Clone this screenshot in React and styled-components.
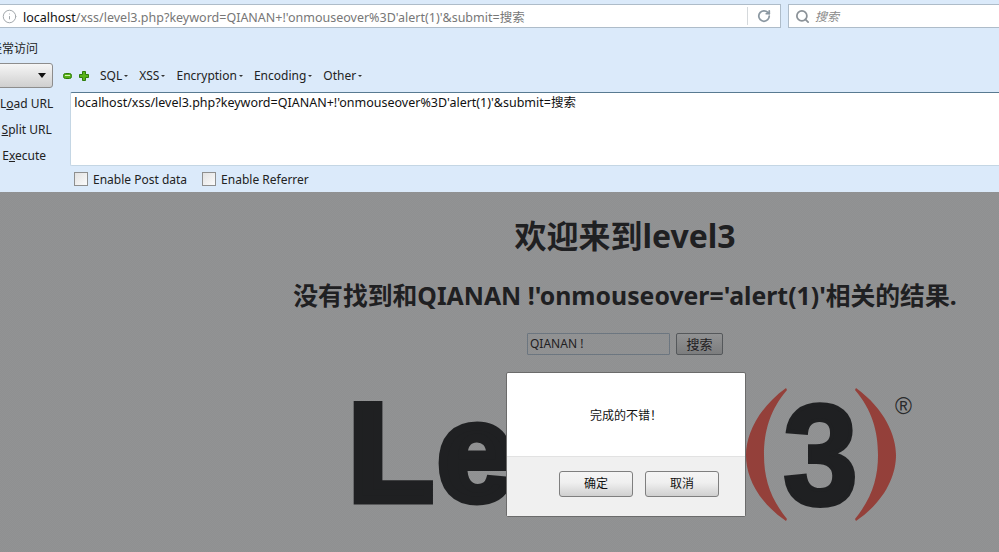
import styled, { createGlobalStyle } from 'styled-components';
import { Info, RotateCw, Search } from 'lucide-react';

const CJK = '"Noto Sans CJK SC"';
const UI_FONT = `"Noto Sans", ${CJK}, sans-serif`;

const GlobalStyle = createGlobalStyle`
  html, body {
    margin: 0;
    padding: 0;
    width: 999px;
    height: 552px;
    overflow: hidden;
    background: #909192;
    font-family: ${UI_FONT};
  }
`;

function App() {
  return (
    <Page>
      <GlobalStyle />
      <Chrome>
        <NavRow>
          <UrlBar>
            <Info size={15} color="#a3a8ac" strokeWidth={1.6} />
            <UrlText><b>localhost</b>/xss/level3.php?keyword=QIANAN+!'onmouseover%3D'alert(1)'&amp;submit=搜索</UrlText>
            <Reload><RotateCw size={14} color="#8b98a2" strokeWidth={3} /></Reload>
          </UrlBar>
          <SearchBar>
            <Search size={15} color="#8b9298" strokeWidth={2.8} />
            <em>搜索</em>
          </SearchBar>
        </NavRow>
        <Bookmarks>经常访问</Bookmarks>
        <HackbarRow>
          <Select><SelectArrow /></Select>
          <svg width="10" height="8" viewBox="0 0 10 8">
            <rect x="0.5" y="1.5" width="8" height="5" rx="2" fill="#57b018" stroke="#2f7d0c" />
            <rect x="2" y="3" width="5" height="1" fill="#d7f3b8" />
          </svg>
          <svg width="10" height="10" viewBox="0 0 10 10">
            <path d="M3.5 .5h3v3h3v3h-3v3h-3v-3h-3v-3h3z" fill="#59b31a" stroke="#2f7d0c" />
          </svg>
          <Menus>
            {['SQL', 'XSS', 'Encryption', 'Encoding', 'Other'].map(m => (
              <Menu key={m}>{m}<Caret /></Menu>
            ))}
          </Menus>
        </HackbarRow>
        <UrlPanel>
          <Actions>
            <Action>L<u>o</u>ad URL</Action>
            <Action><u>S</u>plit URL</Action>
            <Action>E<u>x</u>ecute</Action>
          </Actions>
          <UrlBox>localhost/xss/level3.php?keyword=QIANAN+!'onmouseover%3D'alert(1)'&amp;submit=搜索</UrlBox>
        </UrlPanel>
        <Options>
          <Option><CheckBox />Enable Post data</Option>
          <Option><CheckBox />Enable Referrer</Option>
        </Options>
      </Chrome>
      <Content>
        <Title>欢迎来到level3</Title>
        <Result>没有找到和QIANAN !'onmouseover='alert(1)'相关的结果.</Result>
        <SearchForm>
          <KeywordInput>QIANAN !</KeywordInput>
          <SearchButton>搜索</SearchButton>
        </SearchForm>
        <Logo width="580" height="160" viewBox="335 380 580 160">
          <text x="349" y="500" fontFamily="Liberation Sans" fontWeight="700" fontSize="137" letterSpacing="5" fill="#1f2022" stroke="#1f2022" strokeWidth="9">Level</text>
          <path d="M786 388C757 409 746 436 746 455C746 476 757 501 786 521L787 519C770 498 764 478 764 455C764 431 770 410 787 390Z" fill="#94403a" />
          <path d="M856 388C885 409 896 436 896 455C896 476 885 501 856 521L855 519C872 498 878 478 878 455C878 431 872 410 855 390Z" fill="#94403a" />
          <text x="783" y="503.5" textLength="75" lengthAdjust="spacingAndGlyphs" fontFamily="Liberation Sans" fontWeight="700" fontSize="142" fill="#1f2022" stroke="#1f2022" strokeWidth="4">3</text>
          <text x="895" y="414" fontFamily="Liberation Sans" fontSize="23" fill="#2a2b2d">®</text>
        </Logo>
      </Content>
      <Dialog>
        <Message>完成的不错！</Message>
        <DialogFooter>
          <DialogButton>确定</DialogButton>
          <DialogButton>取消</DialogButton>
        </DialogFooter>
      </Dialog>
    </Page>
  );
}
export default App;

const Page = styled.div`
  position: relative;
  width: 999px;
  height: 552px;
  overflow: hidden;
`
const Chrome = styled.header`
  height: 192px;
  box-sizing: border-box;
  padding-top: 4px;
  background: #dbeafa;
  color: #222;
  font-size: 12px;
`
const NavRow = styled.div`
  display: flex;
  gap: 7px;
  height: 24px;
`
const UrlBar = styled.div`
  flex: 0 0 781px;
  box-sizing: border-box;
  display: flex;
  align-items: center;
  gap: 6px;
  padding-left: 2px;
  background: #fff;
  border: 1px solid #aebcc9;
  border-left: 0;
`
const UrlText = styled.span`
  flex: 1;
  font-size: 12.5px;
  color: #777;
  white-space: nowrap;
  b {
    font-weight: 400;
    color: #111;
  }
`
const Reload = styled.span`
  display: flex;
  align-items: center;
  justify-content: center;
  width: 32px;
  height: 18px;
  border-left: 1px solid #d5d9dc;
`
const SearchBar = styled.div`
  flex: 1;
  box-sizing: border-box;
  display: flex;
  align-items: center;
  gap: 5px;
  padding-left: 6px;
  background: #fff;
  border: 1px solid #aebcc9;
  border-right: 0;
  font-size: 12px;
  color: #8a8a8a;
`
const Bookmarks = styled.div`
  margin: 12px 0 0 -10px;
  height: 17px;
  line-height: 17px;
`
const HackbarRow = styled.div`
  display: flex;
  align-items: center;
  gap: 6px;
  margin-top: 6px;
  height: 25px;
`
const Select = styled.div`
  position: relative;
  flex: 0 0 62px;
  height: 25px;
  box-sizing: border-box;
  margin: 0 4px 0 -9px;
  background: linear-gradient(to bottom, #f6f6f6, #cfcfcf);
  border: 1px solid #8d8d8d;
  border-radius: 3px;
`
const SelectArrow = styled.i`
  position: absolute;
  right: 6px;
  top: 9px;
  border: 4px solid transparent;
  border-top: 5px solid #111;
  border-bottom: 0;
`
const Menus = styled.div`
  display: flex;
  gap: 11px;
  margin-left: 5px;
`
const Menu = styled.span`
  display: flex;
  align-items: center;
  font-size: 12px;
`
const Caret = styled.i`
  margin-left: 2px;
  border: 2px solid transparent;
  border-top: 2px solid #333;
  border-bottom: 0;
`
const UrlPanel = styled.div`
  display: flex;
  margin-top: 4px;
  height: 74px;
`
const Actions = styled.div`
  flex: 0 0 69px;
  box-sizing: border-box;
  padding: 1px 17px 0 0;
  display: flex;
  flex-direction: column;
  align-items: center;
`
const Action = styled.div`
  flex: none;
  height: 26px;
  line-height: 22px;
  white-space: nowrap;
  &:last-child {
    margin-right: 5px;
  }
`
const UrlBox = styled.div`
  flex: 1;
  box-sizing: border-box;
  padding: 1px 3px;
  background: #fff;
  border: 1px solid #c4d6e4;
  border-top-color: #587a91;
  border-right: 0;
  border-radius: 2px 0 0 2px;
  font-size: 12.5px;
  line-height: 18px;
  color: #111;
`
const Options = styled.div`
  display: flex;
  gap: 15px;
  height: 26px;
  align-items: center;
  padding-left: 74px;
`
const Option = styled.label`
  display: flex;
  align-items: center;
  gap: 5px;
`
const CheckBox = styled.i`
  width: 12px;
  height: 12px;
  background: linear-gradient(135deg, #e2e2e2, #fbfbfb);
  border: 1px solid #8e8f8f;
`
const Content = styled.main`
  width: 1250px;
  height: 360px;
  display: flex;
  flex-direction: column;
  align-items: center;
  background: repeating-conic-gradient(#8f9091 0 25%, #929394 0 50%) 0 0 / 2px 2px;
  color: #1f2022;
`
const Title = styled.h1`
  margin: 22px 0 0;
  font-size: 32px;
  line-height: 44px;
`
const Result = styled.h2`
  margin: 19px 0 0;
  font-size: 24.8px;
  line-height: 36px;
  white-space: nowrap;
`
const SearchForm = styled.div`
  display: flex;
  gap: 6px;
  margin-top: 20px;
`
const KeywordInput = styled.div`
  width: 143px;
  height: 22px;
  box-sizing: border-box;
  padding-left: 2px;
  border: 1px solid #6c7680;
  border-radius: 1px;
  font-size: 12px;
  line-height: 20px;
`
const SearchButton = styled.div`
  width: 47px;
  height: 22px;
  box-sizing: border-box;
  text-align: center;
  border: 1px solid #55585b;
  border-radius: 2px;
  background: linear-gradient(to bottom, #929394, #7c7d7e);
  font-size: 13px;
  line-height: 20px;
`
const Logo = styled.svg`
  margin-top: 25px;
  flex: none;
`
const Dialog = styled.div`
  position: absolute;
  left: 506px;
  top: 372px;
  width: 240px;
  height: 145px;
  box-sizing: border-box;
  display: flex;
  flex-direction: column;
  background: #fff;
  border: 1px solid #6b6b6b;
  border-radius: 2px;
`
const Message = styled.div`
  flex: 1;
  display: flex;
  align-items: center;
  justify-content: center;
  font-size: 12px;
  color: #111;
`
const DialogFooter = styled.div`
  flex: none;
  height: 60px;
  box-sizing: border-box;
  display: flex;
  justify-content: flex-end;
  gap: 12px;
  padding: 14px 26px 0 0;
  background: #f0f0f0;
  border-top: 1px solid #e2e2e2;
`
const DialogButton = styled.div`
  width: 74px;
  height: 26px;
  box-sizing: border-box;
  text-align: center;
  border: 1px solid #7f7f7f;
  border-radius: 3px;
  background: linear-gradient(to bottom, #f5f5f5 0, #efefef 45%, #d0d0d0 100%);
  font-size: 12px;
  line-height: 24px;
  color: #111;
`
